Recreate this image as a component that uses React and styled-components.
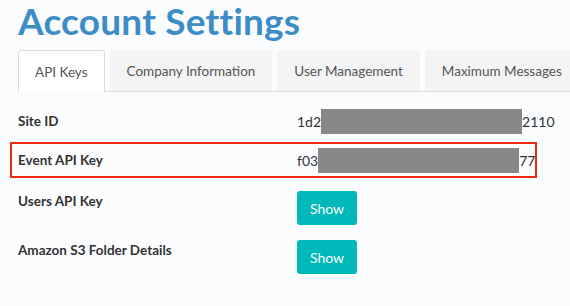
import styled, { createGlobalStyle } from "styled-components";

const GlobalStyle = createGlobalStyle`
  html, body {
    margin: 0;
    padding: 0;
    background: #fbfcfe;
    overflow: hidden;
  }
  body {
    font-family: "Lato", "Open Sans", sans-serif;
    color: #333;
  }
`;

const tabs = [
  "API Keys",
  "Company Information",
  "User Management",
  "Maximum Messages",
];

const keys = [
  { label: "Site ID", head: "1d2", tail: "2110" },
  { label: "Event API Key", head: "f03", tail: "77", highlighted: true },
  { label: "Users API Key", button: true },
  { label: "Amazon S3 Folder Details", button: true },
];

function App() {
  return (
    <Page>
      <GlobalStyle />
      <Title>Account Settings</Title>
      <TabBar>
        {tabs.map((t, i) => (
          <Tab key={t} $active={i === 0}>
            {t}
          </Tab>
        ))}
      </TabBar>
      <KeyList>
        {keys.map((k) => (
          <Row key={k.label} $highlighted={k.highlighted} $button={k.button}>
            <Label>{k.label}</Label>
            {k.button ? (
              <ShowButton>Show</ShowButton>
            ) : (
              <Value>
                {k.head}
                <Mask />
                {k.tail}
              </Value>
            )}
          </Row>
        ))}
      </KeyList>
    </Page>
  );
}

const Page = styled.div`
  width: 570px;
  height: 306px;
  padding-left: 18px;
  box-sizing: border-box;
  overflow: hidden;
`;

const Title = styled.h1`
  margin: 0;
  font-size: 37px;
  line-height: 42px;
  font-weight: 700;
  color: #3d8cc6;
  letter-spacing: 0.2px;
`;

const TabBar = styled.div`
  display: flex;
  gap: 5px;
  margin-top: 8px;
  width: 700px;
  border-bottom: 1px solid #dddddd;
`;

const Tab = styled.div`
  flex: none;
  padding: 0 16px;
  display: flex;
  align-items: center;
  box-sizing: border-box;
  font-size: 13.5px;
  color: #555;
  border-radius: 3px 3px 0 0;
  border: 1px solid ${(p) => (p.$active ? "#dddddd" : "transparent")};
  border-bottom: none;
  background: ${(p) => (p.$active ? "#ffffff" : "#f4f4f4")};
  margin-bottom: ${(p) => (p.$active ? "-1px" : "0")};
  height: ${(p) => (p.$active ? "42px" : "41px")};
`;

const KeyList = styled.div`
  display: flex;
  flex-direction: column;
  gap: 3px;
  margin: 11px 0 0 -8px;
  width: 527px;
`;

const Row = styled.div`
  display: grid;
  grid-template-columns: 279px auto;
  align-items: ${(p) => (p.$button ? "start" : "center")};
  box-sizing: border-box;
  min-height: 36px;
  padding: ${(p) => (p.$button ? "8px 6px 0" : "0 6px")};
  border: 2px solid ${(p) => (p.$highlighted ? "#f02a12" : "transparent")};
`;

const Label = styled.div`
  font-size: 13.5px;
  font-weight: 700;
  color: #333;
  line-height: 20px;
`;

const Value = styled.div`
  display: flex;
  align-items: center;
  font-size: 14px;
  color: #333;
`;

const Mask = styled.span`
  display: inline-block;
  width: 201px;
  height: 25px;
  background: #888888;
`;

const ShowButton = styled.button`
  width: 60px;
  height: 34px;
  border: none;
  border-radius: 3px;
  background: #00b9b8;
  color: #fff;
  font-family: inherit;
  font-size: 14px;
  padding: 0;
  cursor: pointer;
`;

export default App;
